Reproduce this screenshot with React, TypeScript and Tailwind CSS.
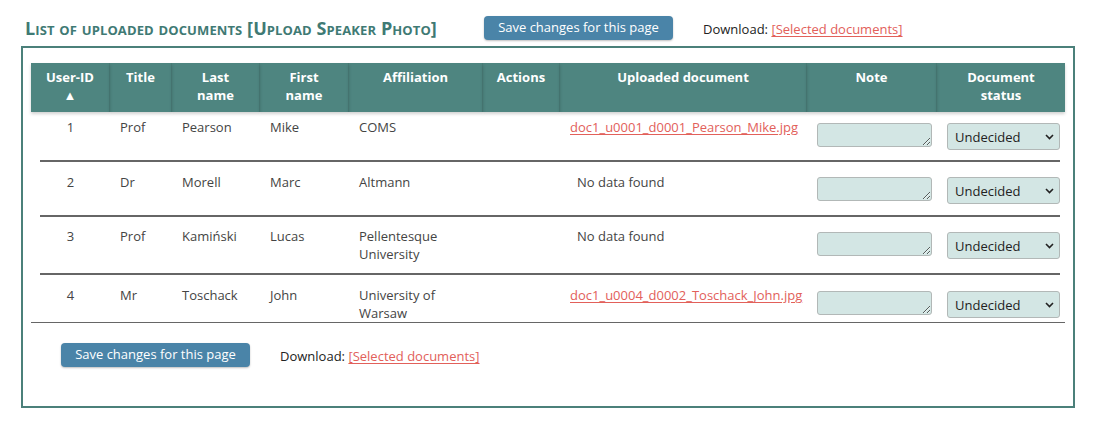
import React from "react";

const COLS = [
  "w-[79px]",
  "w-[62px]",
  "w-[88px]",
  "w-[89px]",
  "w-[134px]",
  "w-[77px]",
  "w-[247px]",
  "w-[130px]",
  "w-[128px]",
];

type Row = {
  id: number;
  title: string;
  last: string;
  first: string;
  aff: string[];
  doc: string | null;
  pt: string;
  ctrl: string;
  h: string;
};

const ROWS: Row[] = [
  { id: 1, title: "Prof", last: "Pearson", first: "Mike", aff: ["COMS"], doc: "doc1_u0001_d0001_Pearson_Mike.jpg", pt: "pt-[6px]", ctrl: "pt-[11px]", h: "h-[48px]" },
  { id: 2, title: "Dr", last: "Morell", first: "Marc", aff: ["Altmann"], doc: null, pt: "pt-[11px]", ctrl: "pt-[15px]", h: "h-[53px]" },
  { id: 3, title: "Prof", last: "Kamiński", first: "Lucas", aff: ["Pellentesque", "University"], doc: null, pt: "pt-[10px]", ctrl: "pt-[15px]", h: "h-[56px]" },
  { id: 4, title: "Mr", last: "Toschack", first: "John", aff: ["University of", "Warsaw"], doc: "doc1_u0004_d0002_Toschack_John.jpg", pt: "pt-[11px]", ctrl: "pt-[16px]", h: "h-[47px]" },
];

function SaveButton() {
  return (
    <button className="h-[24px] w-[189px] rounded-[4px] bg-[#4a84a8] text-[13px] text-white shadow-[0_1px_2px_rgba(0,0,0,0.25)]">
      Save changes for this page
    </button>
  );
}

function Download() {
  return (
    <span className="text-[13px] text-[#222]">
      Download:{" "}
      <a href="#" className="text-[#e2605a] underline underline-offset-2">
        [Selected documents]
      </a>
    </span>
  );
}

function Status() {
  return (
    <div className="relative w-[113px]">
      <select className="h-[27px] w-full appearance-none rounded-[3px] border border-[#b2b8b7] bg-[#d3e6e4] pl-[7px] text-[13px] text-[#222] outline-none">
        <option>Undecided</option>
      </select>
      <svg
        className="pointer-events-none absolute right-[6px] top-[11px]"
        width="9"
        height="6"
        viewBox="0 0 9 6"
        fill="none"
        stroke="#222"
        strokeWidth="1.6"
      >
        <path d="M1 1l3.5 3.5L8 1" />
      </svg>
    </div>
  );
}

export default function App() {
  const headers = [
    ["User-ID", "▲"],
    ["Title"],
    ["Last", "name"],
    ["First", "name"],
    ["Affiliation"],
    ["Actions"],
    ["Uploaded document"],
    ["Note"],
    ["Document", "status"],
  ];

  return (
    <div className="h-[430px] w-[1096px] bg-white font-['Open_Sans',sans-serif]">
      <div className="flex h-[46px] items-center pl-[25px] pt-[10px]">
        <div className="w-[459px] text-[18px] font-bold leading-none tracking-[0.1px] text-[#3f7a74] [font-variant:small-caps]">
          List of uploaded documents [Upload Speaker Photo]
        </div>
        <SaveButton />
        <div className="ml-[30px]">
          <Download />
        </div>
      </div>

      <div className="mx-[21px] h-[362px] border-2 border-[#4b807a] px-[8px] pt-[15px]">
        <div className="flex bg-[#4e8580]">
          {headers.map((lines, i) => (
            <div
              key={i}
              className={`${COLS[i]} h-[49px] border-r border-[#497c77] pt-[5px] text-center text-[13px] font-bold leading-[18px] text-white shadow-[0_2px_3px_rgba(0,0,0,0.18)] last:border-r-0`}
            >
              {lines.map((l) => (
                <div key={l}>{l}</div>
              ))}
            </div>
          ))}
        </div>

        {ROWS.map((r, idx) => (
          <div key={r.id}>
            <div className={`flex ${r.h} text-[13px] leading-[18px] text-[#444]`}>
              <div className={`${COLS[0]} ${r.pt} text-center`}>{r.id}</div>
              <div className={`${COLS[1]} ${r.pt} pl-[10px]`}>{r.title}</div>
              <div className={`${COLS[2]} ${r.pt} pl-[10px]`}>{r.last}</div>
              <div className={`${COLS[3]} ${r.pt} pl-[10px]`}>{r.first}</div>
              <div className={`${COLS[4]} ${r.pt} pl-[10px]`}>
                {r.aff.map((a) => (
                  <div key={a}>{a}</div>
                ))}
              </div>
              <div className={`${COLS[5]} ${r.pt}`} />
              <div className={`${COLS[6]} ${r.pt} pl-[10px]`}>
                {r.doc ? (
                  <a href="#" className="text-[#e2605a] underline underline-offset-2">
                    {r.doc}
                  </a>
                ) : (
                  <span className="pl-[7px]">No data found</span>
                )}
              </div>
              <div className={`${COLS[7]} ${r.ctrl} pl-[10px]`}>
                <textarea className="block h-[24px] w-[115px] rounded-[3px] border border-[#b2b8b7] bg-[#d3e6e4] outline-none" />
              </div>
              <div className={`${COLS[8]} ${r.ctrl} pl-[10px]`}>
                <Status />
              </div>
            </div>
            {idx < ROWS.length - 1 ? (
              <div className="ml-[9px] mr-[5px] h-[2px] bg-[#666]" />
            ) : (
              <div className="h-px bg-[#666]" />
            )}
          </div>
        ))}

        <div className="flex items-center pl-[30px] pt-[20px]">
          <SaveButton />
          <div className="ml-[30px]">
            <Download />
          </div>
        </div>
      </div>
    </div>
  );
}
